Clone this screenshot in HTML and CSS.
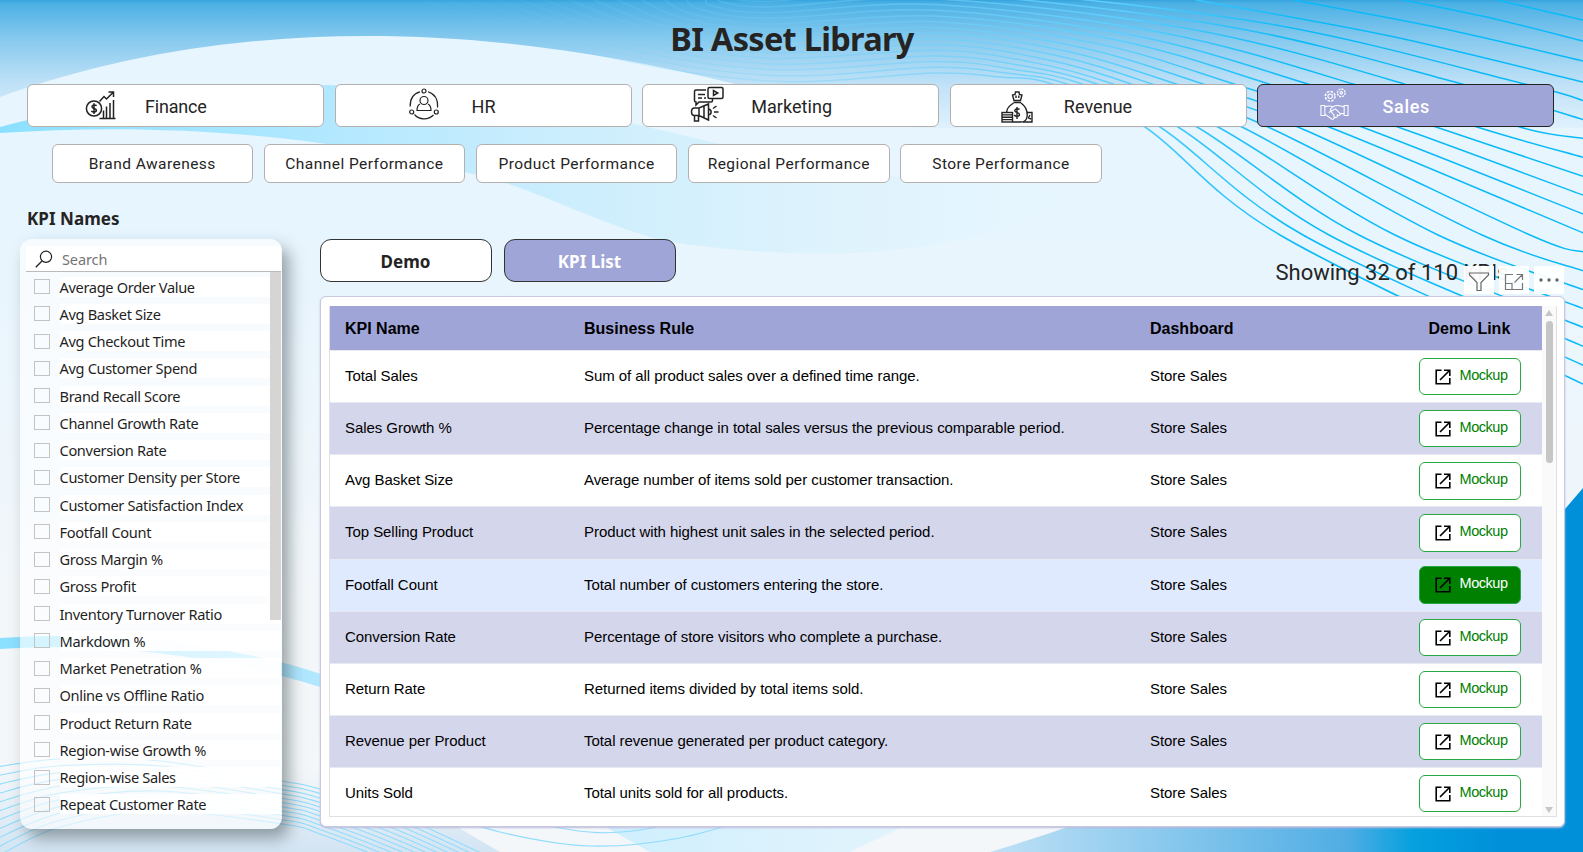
FILE: index.html
```html
<!DOCTYPE html>
<html lang="en">
<head>
<meta charset="utf-8">
<title>BI Asset Library</title>
<link rel="stylesheet" href="styles.css">
</head>
<body>
<svg class="backdrop" width="1583" height="852" viewBox="0 0 1583 852" fill="none">
  <defs>
    <linearGradient id="sky" x1="0" y1="0" x2="0" y2="1"><stop offset="0" stop-color="#36a3dc"/><stop offset=".025" stop-color="#4bb0e4"/><stop offset=".3" stop-color="#86c9ee"/><stop offset=".65" stop-color="#bfe1f7"/><stop offset="1" stop-color="#dff1fd"/></linearGradient>
    <linearGradient id="base" x1="0" y1="0" x2="0" y2="1"><stop offset="0" stop-color="#e6f6ff"/><stop offset=".35" stop-color="#e9f5fd"/><stop offset=".7" stop-color="#f3f7fa"/><stop offset=".92" stop-color="#f4f7f9"/><stop offset="1" stop-color="#f4f7f9"/></linearGradient>
    <linearGradient id="band" x1="0" y1="0" x2="1050" y2="0" gradientUnits="userSpaceOnUse"><stop offset="0" stop-color="#8be0ff"/><stop offset=".31" stop-color="#b2e8ff"/><stop offset=".55" stop-color="#cdeefd"/><stop offset=".8" stop-color="#dff3fd"/><stop offset="1" stop-color="#e6f6ff"/></linearGradient>
    <linearGradient id="deep" x1="990" y1="0" x2="1500" y2="0" gradientUnits="userSpaceOnUse"><stop offset="0" stop-color="#c0e1f6"/><stop offset=".35" stop-color="#88c8ed"/><stop offset=".7" stop-color="#50ade4"/><stop offset=".83" stop-color="#05a0de"/><stop offset="1" stop-color="#0090da"/></linearGradient>
    <linearGradient id="floor" x1="0" y1="770" x2="0" y2="852" gradientUnits="userSpaceOnUse"><stop offset="0" stop-color="#d6e6f4" stop-opacity="0"/><stop offset="1" stop-color="#d3e4f3"/></linearGradient>
    <linearGradient id="line" x1="400" y1="0" x2="1300" y2="0" gradientUnits="userSpaceOnUse"><stop offset="0" stop-color="#6fd0f8" stop-opacity="0"/><stop offset=".4" stop-color="#6fd0f8" stop-opacity=".3"/><stop offset=".6" stop-color="#6fd0f8" stop-opacity=".6"/><stop offset=".8" stop-color="#5ccfff"/><stop offset="1" stop-color="#0abaf8"/></linearGradient>
  </defs>
  <rect width="1583" height="852" fill="url(#base)"/>
  <rect width="1583" height="128" fill="url(#sky)"/>
  <path d="M0 97C220 18 470 18 735 84C800 100 860 122 920 128H1583V240H0Z" fill="#e6f5fe"/>
  <path d="M0 127C110 98 220 85 320 85C470 85 600 115 720 144C830 175 930 185 1010 172L1060 200C960 262 800 262 665 241C590 222 530 184 460 171C330 135 160 122 0 133Z" fill="url(#band)"/>
  <path d="M0 638C130 630 200 645 258 657C290 664 310 670 330 677L620 828H900L850 852H650C520 780 420 710 320 687C220 656 110 642 0 649Z" fill="url(#band)"/>
  <path d="M0 770H360L500 852H0Z" fill="url(#floor)"/>
  <path d="M1583 488L1565 509C1400 690 1200 790 990 852H1583Z" fill="url(#deep)"/>
  <g id="upper-waves" stroke="url(#line)" stroke-width="1.5"></g>
  <g id="lower-waves" stroke="#8fdcfc" stroke-width="1.1"></g>
</svg>

<svg class="sprite">
  <symbol id="open" viewBox="0 0 16 16"><path d="M6.500 1.200H1.200V14.800H14.800V9M9 1.200H14.800V7M14.500 1.500L5 11" fill="none" stroke="#000" stroke-width="1.600"/></symbol>
</svg>

<div class="page">
  <h1 class="title">BI Asset Library</h1>

  <nav class="areas">
    <div class="area"><svg class="area-icon finance" viewBox="0 0 32 32"><g fill="none" stroke="#222" stroke-width="1.5"><circle cx="9" cy="18.5" r="7.6"/><path d="M11.6 15.8C10.6 14.7 7 14.7 7 16.8S11.4 18.2 11.4 20.3S7.6 22.3 6.3 20.9M9 13.2V24"/><path d="M14.500 28.500H30.5M18.500 28V20.5M21.500 28V16.5M25 28V13M28.5 28V10" /><path d="M14.5 11.5L19 6.5L21.5 9L28 2.5M23.5 2H28.5V7"/></g></svg><span class="tight">Finance</span></div>
    <div class="area"><svg class="area-icon hr" viewBox="0 0 32 32"><g fill="none" stroke="#222" stroke-width="1.2"><circle cx="16" cy="3" r="2"/><circle cx="3.7" cy="24" r="2"/><circle cx="28.3" cy="24" r="2"/><path d="M12 3.8C5.5 5.5 2 11 2.2 18.5M20 3.8C27 6 30 12 29.6 19.5M6.5 26.5C11 32 20 32.500 25.500 27"/><circle cx="16" cy="12.500" r="4"/><path d="M12 16C10 17 9 19 9 22.500H23C23 19 22 17 20 16"/></g></svg><span>HR</span></div>
    <div class="area"><svg class="area-icon marketing" viewBox="0 0 34 36"><g fill="none" stroke="#222" stroke-width="1.5"><rect x="18" y="1.500" width="15" height="11" rx="1.500"/><path d="M23.500 4.500V9.500L27.800 7Z"/><path d="M16 4H6Q4.500 4 4.500 5.500V14.500Q4.500 16 6 16V19L9 16H21Q22.500 16 22.500 14.500V13M8 8.500H15M8 12H12M14 12H16"/><path d="M4.500 22H9L18.500 18V34L9 29.500H4.500C.5 29.500.5 22 4.500 22ZM9 22V29.500M4.500 30V35H8.500V30M14 20V32M18.500 23C22 23.500 22 28.500 18.500 29M24 26H28.500M23 22.500L26.500 20M23 29.500L26.500 32"/></g></svg><span>Marketing</span></div>
    <div class="area"><svg class="area-icon revenue" viewBox="0 0 32 32"><g fill="none" stroke="#222" stroke-width="1.400"><path d="M13 9.500L11.500 4L14 3.500L14.500 1H18L18.500 3.500L21 4L19.500 9.500ZM15 4.500V7M17.800 4.500V7M12.500 11.500H20"/><path d="M12.500 12C8 15 5.500 18 5.800 21M20 12C24 15 27 20 26 26C25.500 29 23 31 20 31H12"/><path d="M18.500 18.500C17.500 17.200 13.800 17.500 13.800 19.700S18.500 21 18.500 23.500S14.500 25.700 13.200 24M16 16V28"/><rect x="1" y="21.500" width="10.500" height="9.500"/><path d="M1 23.900H11.500M1 26.200H11.500M1 28.600H11.500M26 21.500H31V31H22M29 24L27.500 27L30 28"/></g></svg><span>Revenue</span></div>
    <div class="area active"><svg class="area-icon sales" viewBox="0 0 30 32"><g fill="none" stroke="#fff" stroke-width="1.100"><circle cx="10.500" cy="8.500" r="5" stroke-width="1.600" stroke-dasharray="2.600 1.300"/><circle cx="10.500" cy="8.500" r="2.300"/><circle cx="22" cy="5" r="4" stroke-width="1.400" stroke-dasharray="2.100 1"/><circle cx="22" cy="5" r="1.300"/><path d="M1 18H5V28.500H1ZM25 18H29V28.500H25ZM5 19.500C9 18 11 18 13.500 19.500M5 27L12 32C14 33 16 30.500 14 29M9 25.500L11 24L15 28.500M14 29C16.500 32 19 30 17.500 27.500C20 29.500 22 27.500 20 25.500L16 21.500L12.500 23.500C10.500 23.500 10.500 22 11.500 21L15 18.500C18 17 21 18.500 25 19.500M20.500 26.500L25 26.500"/></g></svg><span>Sales</span></div>
  </nav>

  <nav class="topics">
    <div class="topic">Brand Awareness</div>
    <div class="topic">Channel Performance</div>
    <div class="topic">Product Performance</div>
    <div class="topic">Regional Performance</div>
    <div class="topic">Store Performance</div>
  </nav>

  <main class="content">
    <aside class="side">
      <h2 class="side-title">KPI Names</h2>
      <div class="slicer">
        <div class="search"><svg class="search-icon" viewBox="0 0 18 18"><circle cx="11" cy="6.800" r="5.600" fill="none" stroke="#222" stroke-width="1.200"/><path d="M7 11L.800 17.200" stroke="#222" stroke-width="1.300"/></svg><span>Search</span></div>
        <ul class="options">
          <li><i></i><span>Average Order Value</span></li>
          <li><i></i><span>Avg Basket Size</span></li>
          <li><i></i><span>Avg Checkout Time</span></li>
          <li><i></i><span>Avg Customer Spend</span></li>
          <li><i></i><span>Brand Recall Score</span></li>
          <li><i></i><span>Channel Growth Rate</span></li>
          <li><i></i><span>Conversion Rate</span></li>
          <li><i></i><span>Customer Density per Store</span></li>
          <li><i></i><span>Customer Satisfaction Index</span></li>
          <li><i></i><span>Footfall Count</span></li>
          <li><i></i><span>Gross Margin %</span></li>
          <li><i></i><span>Gross Profit</span></li>
          <li><i></i><span>Inventory Turnover Ratio</span></li>
          <li><i></i><span>Markdown %</span></li>
          <li><i></i><span>Market Penetration %</span></li>
          <li><i></i><span>Online vs Offline Ratio</span></li>
          <li><i></i><span>Product Return Rate</span></li>
          <li><i></i><span>Region-wise Growth %</span></li>
          <li><i></i><span>Region-wise Sales</span></li>
          <li><i></i><span>Repeat Customer Rate</span></li>
        </ul>
        <div class="side-thumb"></div>
      </div>
    </aside>

    <section class="report">
      <div class="report-head">
        <div class="tab">Demo</div>
        <div class="tab active">KPI List</div>
        <div class="count">Showing 32 of 110 KPIs
          <div class="tools">
            <div class="tool"><svg width="22" height="20" viewBox="0 0 22 20"><path d="M1.500 1H20.500V3L13 10.500V18.500H9V10.500L1.500 3Z" fill="none" stroke="#666" stroke-width="1.200"/></svg></div>
            <div class="tool"><svg width="20" height="18" viewBox="0 0 20 18"><path d="M9 1.500H1.500V16.500H18.500V10M1.500 10.500H8V16.500M12.500 1.500H18.500V7M18 2L10.500 9.500" fill="none" stroke="#777" stroke-width="1.200"/></svg></div>
            <div class="tool"><svg width="20" height="18" viewBox="0 0 20 18" fill="#666"><circle cx="2" cy="7" r="1.700"/><circle cx="10" cy="7" r="1.700"/><circle cx="18" cy="7" r="1.700"/></svg></div>
          </div>
        </div>
      </div>
      <div class="card">
        <div class="grid">
          <div class="rows">
            <div class="row head"><div>KPI Name</div><div>Business Rule</div><div>Dashboard</div><div>Demo Link</div></div>
            <div class="row"><div>Total Sales</div><div>Sum of all product sales over a defined time range.</div><div>Store Sales</div><div><a class="mock"><svg><use href="#open"/></svg><span>Mockup</span></a></div></div>
            <div class="row alt"><div>Sales Growth %</div><div>Percentage change in total sales versus the previous comparable period.</div><div>Store Sales</div><div><a class="mock"><svg><use href="#open"/></svg><span>Mockup</span></a></div></div>
            <div class="row"><div>Avg Basket Size</div><div>Average number of items sold per customer transaction.</div><div>Store Sales</div><div><a class="mock"><svg><use href="#open"/></svg><span>Mockup</span></a></div></div>
            <div class="row alt"><div>Top Selling Product</div><div>Product with highest unit sales in the selected period.</div><div>Store Sales</div><div><a class="mock"><svg><use href="#open"/></svg><span>Mockup</span></a></div></div>
            <div class="row hover"><div>Footfall Count</div><div>Total number of customers entering the store.</div><div>Store Sales</div><div><a class="mock on"><svg><use href="#open"/></svg><span>Mockup</span></a></div></div>
            <div class="row alt"><div>Conversion Rate</div><div>Percentage of store visitors who complete a purchase.</div><div>Store Sales</div><div><a class="mock"><svg><use href="#open"/></svg><span>Mockup</span></a></div></div>
            <div class="row"><div>Return Rate</div><div>Returned items divided by total items sold.</div><div>Store Sales</div><div><a class="mock"><svg><use href="#open"/></svg><span>Mockup</span></a></div></div>
            <div class="row alt"><div>Revenue per Product</div><div>Total revenue generated per product category.</div><div>Store Sales</div><div><a class="mock"><svg><use href="#open"/></svg><span>Mockup</span></a></div></div>
            <div class="row"><div>Units Sold</div><div>Total units sold for all products.</div><div>Store Sales</div><div><a class="mock"><svg><use href="#open"/></svg><span>Mockup</span></a></div></div>
          </div>
          <div class="scroll"><div class="arrow up"></div><div class="thumb"></div><div class="arrow down"></div></div>
        </div>
      </div>
    </section>
  </main>
</div>
<script src="waves.js"></script>
</body>
</html>
```
FILE: styles.css
```css
* { box-sizing: border-box; }
body { margin: 0; width: 1583px; height: 852px; overflow: hidden; position: relative; font-family: "Liberation Sans", Arial, sans-serif; color: #252423; }
.backdrop { position: absolute; left: 0; top: 0; z-index: -1; }
.sprite { display: none; }
.page { display: flex; flex-direction: column; height: 852px; }
.title { margin: 0; height: 84px; text-align: center; font: 700 32.5px/77px "Noto Sans", sans-serif; letter-spacing: -.7px; padding-left: 1px; }

.areas { display: flex; gap: 10.600px; padding-left: 27px; }
.area { width: 297px; height: 43px; flex: none; display: flex; align-items: center; background: #fff; border: 1px solid #b3b0ad; border-radius: 6px; font: 400 18px/43px Roboto, sans-serif; letter-spacing: .05px; padding-top: 2px; }
.area .tight { letter-spacing: -.2px; }
.area.active { background: #a0a5d8; border-color: #252423; color: #fff; font-weight: 500; letter-spacing: .7px; }
.area-icon { flex: none; width: 32px; height: 32px; margin-top: -2px; overflow: visible; }
.finance { margin-left: 57px; margin-right: 28px; }
.hr { margin-left: 72px; margin-right: 32px; margin-top: -5px; }
.marketing { width: 34px; height: 36px; margin-left: 47px; margin-right: 27px; margin-top: -5px; }
.revenue { margin-left: 50px; margin-right: 31px; margin-top: 0; }
.sales { width: 29px; height: 31px; margin-left: 62px; margin-right: 33px; margin-top: -7px; }

.topics { display: flex; gap: 10.700px; padding: 17px 0 0 51.500px; }
.topic { width: 201.500px; height: 39px; flex: none; text-align: center; background: #fff; border: 1px solid #b3b0ad; border-radius: 6px; font: 400 15.500px/39px Roboto, sans-serif; letter-spacing: .45px; }

.content { display: flex; gap: 37.500px; padding-left: 20px; height: 669px; }
.side { width: 262px; flex: none; padding-top: 23px; }
.side-title { margin: 0 0 0 7px; height: 33px; font: 700 17px/25px "Noto Sans", sans-serif; letter-spacing: .05px; }
.slicer { position: relative; height: 590px; border-radius: 12px; padding: 7px 1px 0 6px; background: rgba(255,255,255,.62); box-shadow: 7px 9px 16px rgba(60,75,80,.5); overflow: visible; }
.search { display: flex; gap: 9px; align-items: center; height: 26px; background: #fff; border-bottom: 1px solid #bbb; padding-left: 9px; color: #757575; font: 400 14.500px/24px "Noto Sans", sans-serif; letter-spacing: -.1px; }
.search-icon { width: 18px; height: 18px; }
.options { list-style: none; margin: 0; padding: 1px 0 0 8px; }
.options li { display: flex; gap: 9.500px; align-items: center; height: 27.260px; }
.options i { width: 16px; height: 15px; border: 1px solid #c3c3c3; }
.options span { flex: 1; height: 20px; background: rgba(255,255,255,.9); font: 400 14.600px/20px "Noto Sans", sans-serif; letter-spacing: -.34px; color: #1f1f1f; }
.side-thumb { position: absolute; right: 1px; top: 33px; width: 11px; height: 348px; background: #d6d5d4; }

.report { width: 1245px; }
.report-head { display: flex; height: 113px; padding-top: 56px; }
.tab { width: 172px; height: 43px; margin-right: 12px; background: #fff; border: 1px solid #333; border-radius: 11px; text-align: center; font: 700 17px/43px "Noto Sans", sans-serif; }
.tab.active { background: #a0a5d8; color: #fff; }
.count { position: relative; margin-left: auto; width: 289px; font: 400 22px/28px Roboto, sans-serif; padding-top: 20px; letter-spacing: 0; white-space: nowrap; }
.tools { position: absolute; left: 188px; top: 27px; display: flex; gap: 5px; }
.tool { width: 30px; height: 28px; background: rgba(255,255,255,.95); display: flex; align-items: center; justify-content: center; padding-top: 3px; }

.card { height: 531px; background: #fff; border: 1px solid #c8c8e0; border-radius: 6px; box-shadow: 0 1px 2px #bcbcdc; padding: 9px 6.500px 9px 8.500px; }
.grid { display: flex; height: 511px; border: 1px solid #e0e0e4; border-top: 0; overflow: hidden; }
.rows { flex: 1; }
.row { display: grid; grid-template-columns: 239px 566px 235px 1fr; align-items: center; height: 52.150px; padding-left: 15px; font-size: 15px; letter-spacing: -.055px; color: #000; border-top: 1px solid #e9e9f2; background: #fff; }
.row > div { padding-bottom: 2px; }
.row > div:last-child { padding-left: 33.500px; padding-bottom: 0; }
.row.alt { background: #d4d6ec; }
.row.hover { background: #e0eaff; }
.row.head { height: 44px; font-weight: 700; font-size: 16px; letter-spacing: 0; background: #a0a5d8; border: 0; }
.row.head > div { padding-bottom: 0; padding-top: 1px; }
.row.head > div:last-child { padding-left: 43.500px; }
.mock { display: flex; gap: 9px; width: 102px; height: 37.500px; border: 1px solid #28a745; border-radius: 6px; background: #fff; color: #008000; font-size: 14.500px; line-height: 33px; letter-spacing: -.45px; padding-left: 15px; }
.mock svg { width: 16px; height: 16px; margin-top: 10px; }
.mock.on { background: #008000; color: #fff; }
.scroll { width: 14px; background: #fafafa; display: flex; flex-direction: column; align-items: center; }
.arrow { border: 4px solid transparent; }
.arrow.up { border-bottom: 6px solid #c6c6c6; border-top: 0; margin-top: 4px; }
.arrow.down { border-top: 6px solid #c6c6c6; border-bottom: 0; margin-top: auto; margin-bottom: 3px; }
.thumb { width: 7px; height: 142px; border-radius: 4px; background: #c6c6c6; margin-top: 5px; }
```
FILE: waves.js
```js
// Smooth path through a list of points (Catmull-Rom converted to cubic segments).
function smooth(p) {
  let d = `M${p[0]}`;
  for (let i = 0; i < p.length - 1; i++) {
    const a = p[i - 1] || p[i], b = p[i], c = p[i + 1], e = p[i + 2] || c;
    d += `C${b[0] + (c[0] - a[0]) / 6} ${b[1] + (c[1] - a[1]) / 6} ${c[0] - (e[0] - b[0]) / 6} ${c[1] - (e[1] - b[1]) / 6} ${c[0]} ${c[1]}`;
  }
  return d;
}
function draw(id, points) {
  const path = document.createElementNS("http://www.w3.org/2000/svg", "path");
  path.setAttribute("d", smooth(points));
  document.getElementById(id).appendChild(path);
}
const at84 = [, , , , 1525, 1462, 1404, 1353, 1308, 1269, 1234, 1203, 1176, 1152, 1131, 1113, 1097, 1082, 1067, 1052];
const at127 = [, , , , , , 1520, 1477, 1436, 1398, 1362, 1329, 1298, 1268, 1242, 1218, 1197, 1178, 1160, 1145];
const at235 = [, , , , , , , , , , , , 1530, 1482, 1438, 1395, 1359, 1329, 1303, 1280];
draw("upper-waves", [[1497, 0], [1583, 20]]);
draw("upper-waves", [[1403, 0], [1495, 19], [1583, 41]]);
draw("upper-waves", [[1293, 0], [1440, 28], [1583, 61]]);
draw("upper-waves", [[1196, 0], [1390, 36], [1583, 82]]);
for (let i = 4; i < 20; i++) {
  const crest = 73 - (19 - i) * 5.7;
  const points = [[410 + (19 - i) * 25, -4], [590 + (19 - i) * 10, crest * .7 + 2], [770, crest + 8], [935, crest]];
  points.push([at84[i] - (at84[i] - 935) * .45, crest + (84 - crest) * .36]);
  points.push([at84[i], 84]);
  if (at127[i]) points.push([at127[i], 127]);
  if (at235[i]) points.push([at235[i], 235]);
  points.push([1583, 25 + 18.900 * i]);
  draw("upper-waves", points);
}
for (let i = 0; i < 11; i++) {
  draw("lower-waves", [[-4, 767 + i * 9], [60, 759 + i * 6.800], [160, 761 + i * 5], [282, 781 + i * 4.300], [320, 789 + i * 4.500], [400, 816 + i * 5], [500, 862 + i * 5]]);
}
draw("lower-waves", [[480, 800], [560, 828], [640, 830], [760, 800]]);
draw("lower-waves", [[400, 800], [500, 832], [590, 846], [680, 838], [760, 815]]);
```
